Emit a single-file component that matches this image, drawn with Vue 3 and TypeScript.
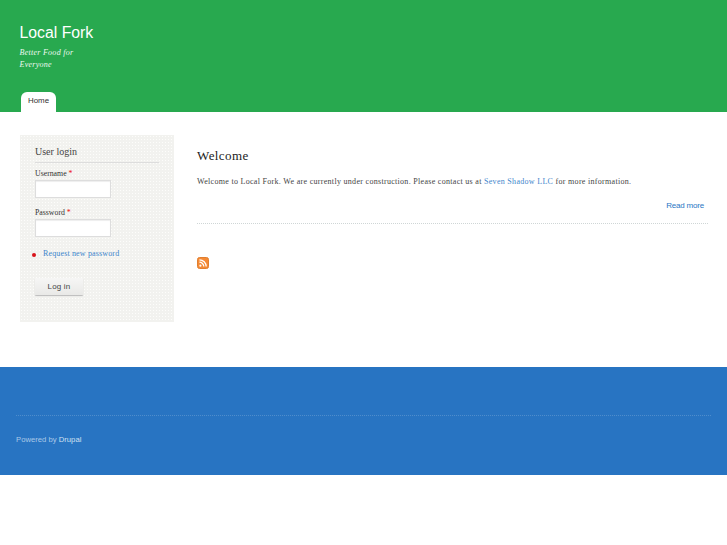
<script setup lang="ts">
const title: string = 'Local Fork'
</script>

<template>
  <div class="page">
    <header class="head">
      <div class="site-name">{{ title }}</div>
      <div class="slogan">Better Food for<br />Everyone</div>
      <nav class="tabs"><a class="tab">Home</a></nav>
    </header>
    <div class="content">
      <aside class="side">
        <h2 class="side-title">User login</h2>
        <label class="lbl">Username <span class="req">*</span></label>
        <input class="inp" type="text" />
        <label class="lbl second">Password <span class="req">*</span></label>
        <input class="inp" type="password" />
        <ul class="links"><li><a>Request new password</a></li></ul>
        <button class="btn" type="button">Log in</button>
      </aside>
      <main class="main">
        <h1 class="node-title">Welcome</h1>
        <p class="body-text">Welcome to Local Fork. We are currently under construction. Please contact us at <a>Seven Shadow LLC</a> for more information.</p>
        <div class="more"><a>Read more</a></div>
        <svg class="feed" width="12" height="12" viewBox="0 0 12 12">
          <rect x="0.5" y="0.5" width="11" height="11" rx="2" fill="#f58a35" stroke="#e07f30" />
          <circle cx="3.4" cy="8.7" r="1.1" fill="#fff" />
          <path d="M2.4 5.2a4.4 4.4 0 0 1 4.4 4.4M2.4 2.8a6.8 6.8 0 0 1 6.8 6.8" fill="none" stroke="#fff" stroke-width="1.3" />
        </svg>
      </main>
    </div>
    <footer class="foot">
      <div class="foot-line"></div>
      <div class="powered">Powered by <a>Drupal</a></div>
    </footer>
  </div>
</template>

<style>
html, body { margin: 0; background: #fff; }
</style>

<style scoped>
.page { width: 727px; height: 545px; overflow: hidden; font-family: "Liberation Serif", serif; color: #3b3b3b; }
.head { height: 112px; box-sizing: border-box; background: #28a94f; padding: 23px 0 0 19.5px; display: flex; flex-direction: column; }
.site-name { font: 15.8px/20px "Liberation Sans", sans-serif; color: #fff; }
.slogan { font: italic 8px/12px "Liberation Serif", serif; color: #eef9f1; letter-spacing: .27px; margin-top: 4px; }
.tabs { margin-top: auto; display: flex; }
.tab { margin-left: 1.5px; width: 35px; height: 20px; box-sizing: border-box; background: #fff; border-radius: 6px 6px 0 0; text-align: center; font: 7.9px/18px "Liberation Sans", sans-serif; color: #333; }
.content { display: flex; height: 255px; box-sizing: border-box; padding: 23px 19px 0 20px; }
.side { width: 154px; height: 187px; box-sizing: border-box; padding: 10px 15px 0; background-color: #f2f2ef; background-image: radial-gradient(#fdfdfb 35%, transparent 42%); background-size: 3px 3px; }
.side-title { margin: 0 0 6px; padding-bottom: 3px; font: normal 10px/14px "Liberation Serif", serif; color: #444; border-bottom: 1px solid #ddd; }
.lbl { display: block; font: 7.8px/11px "Liberation Serif", serif; color: #333; margin-top: -1px; }
.lbl.second { margin-top: 9px; }
.req { color: #e11; }
.inp { display: block; width: 76px; height: 18px; box-sizing: border-box; margin: 1px 0 0; padding: 0; background: #fff; border: 1px solid #ddd; box-shadow: inset 0 1px 1px #eee; }
.links { margin: 11px 0 0; padding: 0; list-style: none; }
.links li { position: relative; padding-left: 8px; font: 8px/12px "Liberation Serif", serif; letter-spacing: .15px; color: #3f86cc; }
.links li::before { content: ""; position: absolute; left: -3px; top: 5px; width: 4px; height: 4px; border-radius: 50%; background: #d8141a; }
.btn { display: block; margin-top: 18px; width: 48px; height: 17px; padding: 0; border: none; border-radius: 1px; background: linear-gradient(#f6f6f5, #e9e9e7); box-shadow: 0 1px 1px #bbb; font: 8px/17px "Liberation Sans", sans-serif; letter-spacing: .2px; color: #444; }
.main { flex: 1; margin-left: 23px; min-width: 0; }
.node-title { margin: 12px 0 0; font: normal 13px/17px "Liberation Serif", serif; letter-spacing: .4px; color: #222; }
.body-text { margin: 12px 0 0; font: 8px/12px "Liberation Serif", serif; letter-spacing: .3px; color: #444; white-space: nowrap; }
.body-text a { color: #3f86cc; }
.more { margin-top: 12px; padding: 0 4px 11px 0; border-bottom: 1px dotted #cfd6d6; text-align: right; font: 8px/12px "Liberation Sans", sans-serif; letter-spacing: -.2px; color: #2a76c4; }
.feed { display: block; margin-top: 33px; }
.foot { height: 108px; box-sizing: border-box; background: #2874c2; padding: 48px 16px 0; }
.foot-line { border-top: 1px dotted #4f8dcc; }
.powered { margin-top: 18px; font: 7.7px/12px "Liberation Sans", sans-serif; color: #a9c8e8; }
.powered a { color: #cfe0f1; }
</style>
